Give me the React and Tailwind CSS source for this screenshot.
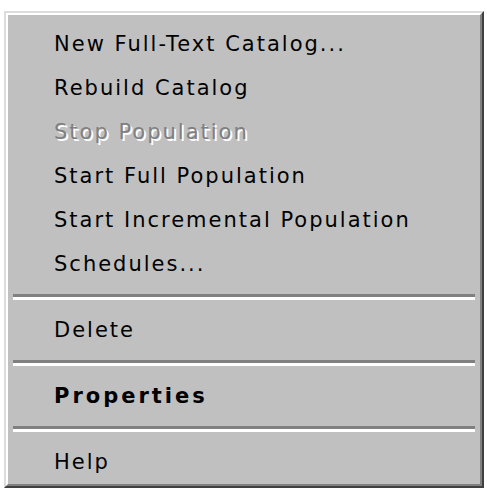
export default function App() {
  const top = [
    "New Full-Text Catalog...",
    "Rebuild Catalog",
    { label: "Stop Population", disabled: true },
    "Start Full Population",
    "Start Incremental Population",
    "Schedules...",
  ];

  const Item = ({ children, disabled, bold }) => (
    <div
      className={
        "flex h-[44px] items-center pl-[46px] text-[21px] leading-none " +
        (disabled
          ? "text-[#808080] [text-shadow:2px_2px_0_#ffffff] "
          : "text-black ") +
        (bold ? "font-bold tracking-[3px]" : "tracking-[2px]")
      }
    >
      {children}
    </div>
  );

  const Separator = () => (
    <div className="flex h-[22px] flex-col justify-center px-[5px]">
      <div className="h-[3px] bg-[#808080]" />
      <div className="h-[3px] bg-white" />
    </div>
  );

  return (
    <div className="h-[492px] w-[487px] bg-white pl-[4px] pt-[11px]">
      {/* classic raised frame: light top/left, dark bottom/right */}
      <div className="w-[480px] border-b-[2px] border-l-[2px] border-r-[2px] border-t-[2px] border-b-[#404040] border-l-[#dcdcdc] border-r-[#404040] border-t-[#dcdcdc]">
        <div
          className="border-b-[2px] border-l-[2px] border-r-[2px] border-t-[2px] border-b-[#808080] border-l-white border-r-[#808080] border-t-white bg-[#c0c0c0] pb-0 pt-[7px]"
          style={{ fontFamily: '"DejaVu Sans", Verdana, sans-serif' }}
        >
          {top.map((t) =>
            typeof t === "string" ? (
              <Item key={t}>{t}</Item>
            ) : (
              <Item key={t.label} disabled>
                {t.label}
              </Item>
            )
          )}
          <Separator />
          <Item>Delete</Item>
          <Separator />
          <Item bold>Properties</Item>
          <Separator />
          <Item>Help</Item>
        </div>
      </div>
    </div>
  );
}
